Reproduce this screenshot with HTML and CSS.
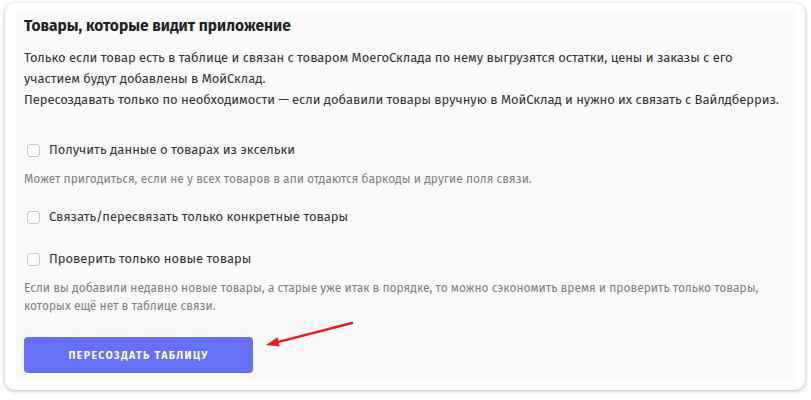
FILE: index.html
```html
<!DOCTYPE html>
<html lang="ru">
<head>
<meta charset="utf-8">
<link rel="stylesheet" href="styles.css">
</head>
<body>
<div class="card">
  <div class="panel">
    <h2 class="title">Товары, которые видит приложение</h2>
    <p class="lead">Только если товар есть в таблице и связан с товаром МоегоСклада по нему выгрузятся остатки, цены и заказы с его<br>участием будут добавлены в МойСклад.<br>Пересоздавать только по необходимости — если добавили товары вручную в МойСклад и нужно их связать с Вайлдберриз.</p>
    <div class="options">
      <div class="option">
        <label class="check"><span class="box"></span>Получить данные о товарах из эксельки</label>
        <p class="hint">Может пригодиться, если не у всех товаров в апи отдаются баркоды и другие поля связи.</p>
      </div>
      <div class="option option-plain">
        <label class="check"><span class="box"></span>Связать/пересвязать только конкретные товары</label>
      </div>
      <div class="option">
        <label class="check"><span class="box"></span>Проверить только новые товары</label>
        <p class="hint">Если вы добавили недавно новые товары, а старые уже итак в порядке, то можно сэкономить время и проверить только товары,<br>которых ещё нет в таблице связи.</p>
      </div>
    </div>
    <div class="actions">
      <button class="btn">Пересоздать таблицу</button>
      <svg class="arrow" width="100" height="30" viewBox="0 0 100 30">
        <path d="M89 2 L15.6 20.8" stroke="#e81c1c" stroke-width="2.4" stroke-linecap="round" fill="none"/>
        <path d="M3 24 L14.5 16.2 L16.7 25.4 Z" fill="#e81c1c"/>
      </svg>
    </div>
  </div>
</div>
</body>
</html>
```
FILE: styles.css
```css
* { box-sizing: border-box; }
html, body { margin: 0; padding: 0; background: #ffffff; }
body {
  padding: 3px 6px 10px 5px;
  font-family: "Fira Sans", "Open Sans", "Noto Sans", sans-serif;
}
.card {
  background: #ffffff;
  border-radius: 10px;
  box-shadow: 0 1px 4px rgba(0,0,0,0.28);
  padding: 9px 10px 10px 11px;
}
.panel {
  background: #fafafa;
  padding: 3px 4px 8px 8px;
  height: 368px;
}
.title {
  margin: 0;
  font-size: 15.5px;
  font-weight: 700;
  color: #222222;
  line-height: 22px;
}
.lead {
  margin: 10px 0 0 0;
  font-size: 13px;
  line-height: 21px;
  color: #333333;
  white-space: nowrap;
  letter-spacing: -0.05px;
}
.options { margin-top: 31px; display: flex; flex-direction: column; }
.option { display: flex; flex-direction: column; }
.option + .option { margin-top: 20px; }
.option-plain { padding-bottom: 4px; }
.check {
  display: flex;
  align-items: center;
  gap: 9px;
  font-size: 13px;
  line-height: 18px;
  color: #333333;
  padding-left: 3px;
}
.box {
  width: 13px;
  height: 13px;
  border: 1px solid #c8c8c8;
  border-radius: 3px;
  background: #ffffff;
  flex: none;
}
.hint {
  margin: 11px 0 0 0;
  font-size: 12px;
  line-height: 18px;
  color: #808080;
  white-space: nowrap;
}
.actions {
  margin-top: 22px;
  display: flex;
  align-items: flex-start;
}
.btn {
  width: 229px;
  height: 36px;
  background: #6771f8;
  border: none;
  border-radius: 4px;
  color: #ffffff;
  font-family: "Fira Sans", "Open Sans", "Noto Sans", sans-serif;
  font-size: 10.5px;
  font-weight: 700;
  text-transform: uppercase;
  letter-spacing: 1.4px;
}
.arrow { margin-left: 10px; margin-top: -16px; }
```
